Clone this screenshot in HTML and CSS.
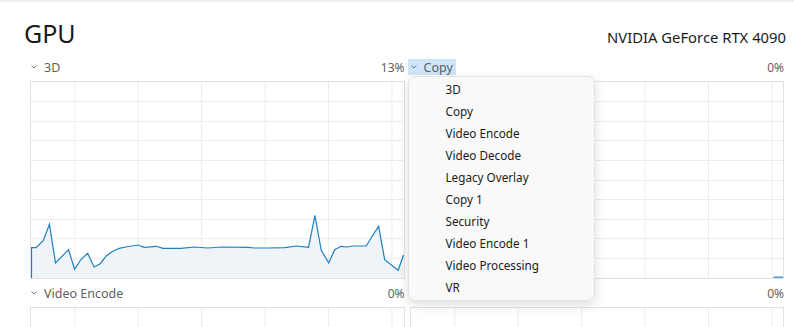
FILE: index.html
```html
<!DOCTYPE html>
<html lang="en">
<head>
    <meta charset="UTF-8">
    <meta name="viewport" content="width=device-width, initial-scale=1.0">
    <title>GPU</title>
    <link rel="stylesheet" href="styles.css">
</head>
<body>

<div class="topbar"></div>

<div class="head">
    <h1 class="title">GPU</h1>
    <div class="model">NVIDIA GeForce RTX 4090</div>
</div>

<div class="engines">

    <!-- 3D -->
    <section class="engine">
        <div class="engine-head">
            <span class="engine-name">
                <svg class="chev" width="6" height="4" viewBox="0 0 6 4"><path d="M0.5 0.5 L3 3 L5.5 0.5"/></svg>3D
            </span>
            <span class="engine-pct">13%</span>
        </div>
        <div class="chart">
            <svg viewBox="0 0 370 196" preserveAspectRatio="none">
                <g class="grid">
                    <path d="M43.5 0V196M106.5 0V196M169.5 0V196M232.5 0V196M295.5 0V196M358.5 0V196"/>
                    <path d="M0 19.5H370M0 39.5H370M0 58.5H370M0 78.5H370M0 98.5H370M0 117.5H370M0 137.5H370M0 156.5H370M0 176.5H370"/>
                </g>
                <polygon class="area" points="0,196 0,165.7 5,165.7 12.3,158.3 18.3,142.3 24.3,181 37.3,167.7 43.3,187.3 49.7,177.3 56.3,171.3 62.7,185 68.7,181.7 74.7,174 81.3,169.3 87.7,166.3 94,165 106.3,163 112.3,165.3 124.7,164.3 131,166.3 149,166.3 162.3,165 175.7,166 189,165 215.7,165.3 222,166 235,166 252,165.7 264,164 275.7,165.3 282,133.3 288.3,168.3 295.7,181 301.7,167.7 308,164.3 314,165 320,164 333,164 339,154 345.3,144.3 351.3,177.7 364.7,188.3 370,173 370,196"/>
                <polyline class="line" points="0.5,196 0.5,165.7 5,165.7 12.3,158.3 18.3,142.3 24.3,181 37.3,167.7 43.3,187.3 49.7,177.3 56.3,171.3 62.7,185 68.7,181.7 74.7,174 81.3,169.3 87.7,166.3 94,165 106.3,163 112.3,165.3 124.7,164.3 131,166.3 149,166.3 162.3,165 175.7,166 189,165 215.7,165.3 222,166 235,166 252,165.7 264,164 275.7,165.3 282,133.3 288.3,168.3 295.7,181 301.7,167.7 308,164.3 314,165 320,164 333,164 339,154 345.3,144.3 351.3,177.7 364.7,188.3 370,173"/>
            </svg>
        </div>
    </section>

    <!-- Copy, with the engine picker open -->
    <section class="engine">
        <div class="engine-head">
            <span class="engine-name open">
                <svg class="chev" width="6" height="4" viewBox="0 0 6 4"><path d="M0.5 0.5 L3 3 L5.5 0.5"/></svg>Copy
                <ul class="menu">
                    <li>3D</li>
                    <li>Copy</li>
                    <li>Video Encode</li>
                    <li>Video Decode</li>
                    <li>Legacy Overlay</li>
                    <li>Copy 1</li>
                    <li>Security</li>
                    <li>Video Encode 1</li>
                    <li>Video Processing</li>
                    <li>VR</li>
                </ul>
            </span>
            <span class="engine-pct">0%</span>
        </div>
        <div class="chart">
            <svg viewBox="0 0 370 196" preserveAspectRatio="none">
                <g class="grid">
                    <path d="M43.5 0V196M106.5 0V196M169.5 0V196M232.5 0V196M295.5 0V196M358.5 0V196"/>
                    <path d="M0 19.5H370M0 39.5H370M0 58.5H370M0 78.5H370M0 98.5H370M0 117.5H370M0 137.5H370M0 156.5H370M0 176.5H370"/>
                </g>
                <polyline class="line" points="360,195.2 371,195.2"/>
            </svg>
        </div>
    </section>

    <!-- Video Encode -->
    <section class="engine">
        <div class="engine-head">
            <span class="engine-name">
                <svg class="chev" width="6" height="4" viewBox="0 0 6 4"><path d="M0.5 0.5 L3 3 L5.5 0.5"/></svg>Video Encode
            </span>
            <span class="engine-pct">0%</span>
        </div>
        <div class="chart">
            <svg viewBox="0 0 370 196" preserveAspectRatio="none">
                <g class="grid">
                    <path d="M43.5 0V196M106.5 0V196M169.5 0V196M232.5 0V196M295.5 0V196M358.5 0V196"/>
                    <path d="M0 19.5H370M0 39.5H370"/>
                </g>
            </svg>
        </div>
    </section>

    <!-- fourth engine, its name is under the open picker -->
    <section class="engine">
        <div class="engine-head">
            <span class="engine-name"></span>
            <span class="engine-pct">0%</span>
        </div>
        <div class="chart">
            <svg viewBox="0 0 370 196" preserveAspectRatio="none">
                <g class="grid">
                    <path d="M43.5 0V196M106.5 0V196M169.5 0V196M232.5 0V196M295.5 0V196M358.5 0V196"/>
                    <path d="M0 19.5H370M0 39.5H370"/>
                </g>
            </svg>
        </div>
    </section>

</div>

</body>
</html>
```

FILE: styles.css
```css
body {
    margin: 0;
    font-family: "Noto Sans", "Open Sans", sans-serif;
    background: #ffffff;
    color: #1a1a1a;
    overflow: hidden;
}

.topbar {
    height: 2px;
    background-color: #eef2f7;
}

.head {
    display: flex;
    justify-content: space-between;
    align-items: baseline;
    margin: 18px 8px 0 24px;
}
.title {
    margin: 0;
    font-size: 25px;
    font-weight: 400;
    line-height: 26px;
}
.model {
    font-size: 14.8px;
}

.engines {
    display: grid;
    grid-template-columns: 1fr 1fr;
    column-gap: 4px;
    row-gap: 6px;
    padding: 0 9px 0 30px;
    margin-top: 12px;
}

.engine-head {
    display: flex;
    justify-content: space-between;
    align-items: center;
    height: 16px;
    margin-bottom: 6px;
    color: #5f5f5f;
    font-size: 12.5px;
}
.engine-name {
    position: relative;
    display: flex;
    align-items: center;
    height: 16px;
    margin-left: -2px;
    padding: 0 3px;
}
.engine-name.open {
    background-color: #cde5f8; /* picker open */
}
.chev {
    margin-right: 7px;
    fill: none;
    stroke: #7a7a7a;
    stroke-width: 1;
}
.engine-pct {
    margin-right: 1px;
    font-size: 12px;
}

.chart {
    width: calc(100% - 3px);
    height: 196px;
    border: 1px solid #e2e2e2;
}
.chart svg {
    display: block;
    width: 100%;
    height: 100%;
}
.grid path {
    fill: none;
    stroke: #ececec;
    stroke-width: 1;
}
.area {
    fill: #eff4f9;
}
.line {
    fill: none;
    stroke: #1f80c1;
    stroke-width: 1.2;
}

/* engine picker */
.menu {
    position: absolute;
    top: calc(100% + 1px);
    left: 0;
    z-index: 5;
    width: 187px;
    margin: 0;
    padding: 1px 0 2px;
    list-style: none;
    background-color: #f9f9f9;
    border: 1px solid #e3e3e3;
    border-radius: 7px;
    box-shadow: 0 4px 12px rgba(0, 0, 0, 0.13);
    box-sizing: border-box;
}
.menu li {
    padding-left: 37px;
    line-height: 22px;
    font-size: 11.7px;
    color: #1a1a1a;
    white-space: nowrap;
}
```
